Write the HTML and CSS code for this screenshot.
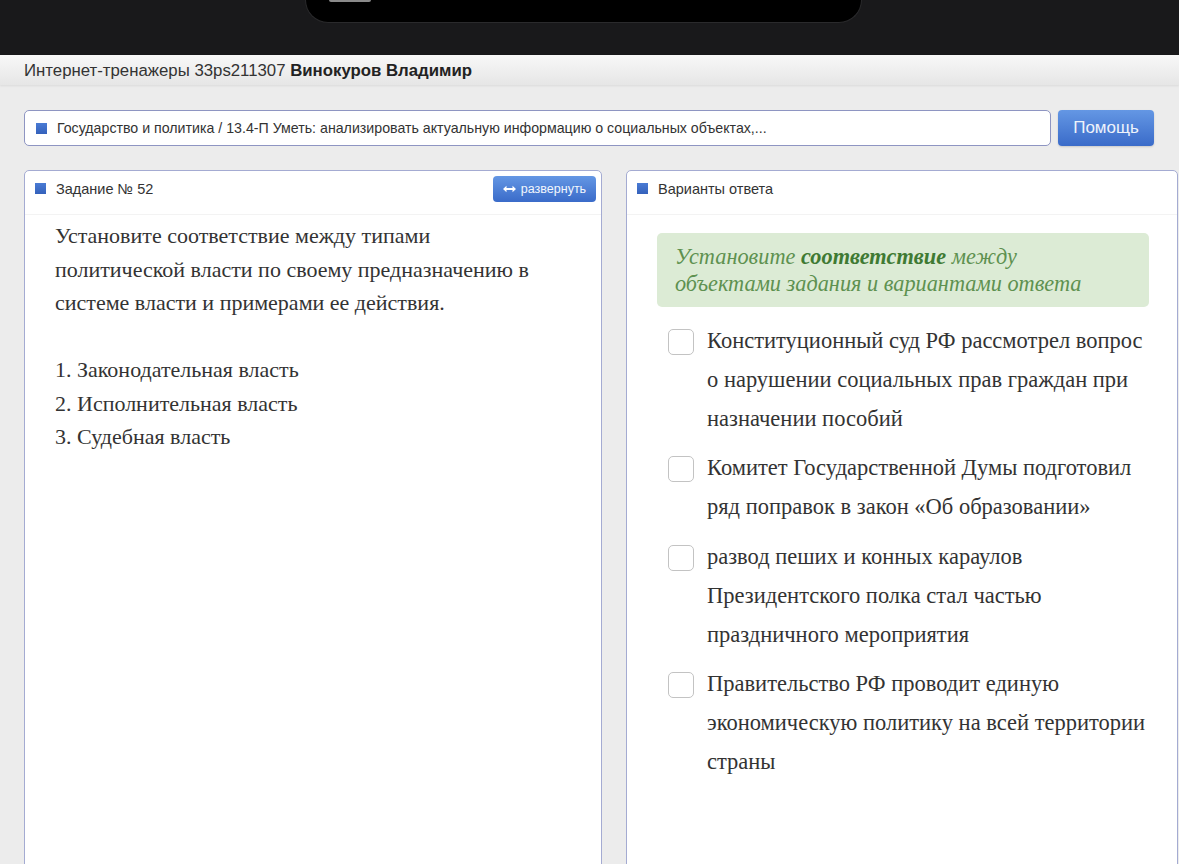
FILE: index.html
```html
<html>
<head>
  <meta charset="UTF-8">
  <meta name="viewport" content="width=device-width, initial-scale=1.0">
  <title>Интернет-тренажеры</title>
  <link rel="stylesheet" href="styles.css">
</head>
<body>
  <div class="device-top">
    <div class="notch">
      <div class="notch-mark"></div>
    </div>
  </div>

  <div class="topbar">
    Интернет-тренажеры 33ps211307 <b>Винокуров Владимир</b>
  </div>

  <div class="page">
    <div class="crumbs-row">
      <div class="crumbs">
        <span class="marker"></span>
        Государство и политика / 13.4-П Уметь: анализировать актуальную информацию о социальных объектах,...
      </div>
      <button class="btn btn-help">Помощь</button>
    </div>

    <div class="columns">
      <div class="panel">
        <div class="panel-head">
          <span class="marker"></span>
          <span class="panel-title">Задание № 52</span>
          <button class="btn btn-small">
            <svg width="13" height="8" viewBox="0 0 13 8">
              <path d="M0 4 L3.5 0.8 V3 H9.5 V0.8 L13 4 L9.5 7.2 V5 H3.5 V7.2 Z" fill="#fff"/>
            </svg>
            развернуть
          </button>
        </div>
        <div class="task-text">
          Установите соответствие между типами политической власти по своему предназначению в системе власти и примерами ее действия.<br>
          <br>
          1. Законодательная власть<br>
          2. Исполнительная власть<br>
          3. Судебная власть
        </div>
      </div>

      <div class="panel">
        <div class="panel-head">
          <span class="marker"></span>
          <span class="panel-title">Варианты ответа</span>
        </div>
        <div class="answers">
          <div class="hint">
            Установите <b>соответствие</b> между<br>
            объектами задания и вариантами ответа
          </div>
          <ul class="options">
            <li class="option">
              <span class="check"></span>
              <span class="option-text">Конституционный суд РФ рассмотрел вопрос о нарушении социальных прав граждан при назначении пособий</span>
            </li>
            <li class="option">
              <span class="check"></span>
              <span class="option-text">Комитет Государственной Думы подготовил ряд поправок в закон «Об образовании»</span>
            </li>
            <li class="option">
              <span class="check"></span>
              <span class="option-text">развод пеших и конных караулов Президентского полка стал частью праздничного мероприятия</span>
            </li>
            <li class="option">
              <span class="check"></span>
              <span class="option-text">Правительство РФ проводит единую экономическую политику на всей территории страны</span>
            </li>
          </ul>
        </div>
      </div>
    </div>
  </div>
</body>
</html>
```

FILE: styles.css
```css
:root {
  --blue: #3d6cc6;
  --border: #a4abd2;
  --text: #333333;
  --bg: #ececec;
}

* {
  margin: 0;
  padding: 0;
  box-sizing: border-box;
}

html, body {
  height: 100%;
  overflow: hidden;
}

body {
  background: var(--bg);
  font-family: 'Liberation Sans', Arial, sans-serif;
  color: var(--text);
}

/* phone status area */
.device-top {
  height: 55px;
  background: #19191b;
}

.notch {
  margin-left: 305px;
  width: 557px;
  height: 23px;
  background: #000;
  border: 1px solid #2a2a2c;
  border-top: none;
  border-radius: 0 0 36px 36px;
}

.notch-mark {
  margin-left: 23px;
  width: 42px;
  height: 2px;
  background: #8a8a8a;
  border-radius: 0 0 2px 2px;
}

.topbar {
  height: 30px;
  padding: 6px 24px 0;
  font-size: 16.8px;
  color: #333;
  background: linear-gradient(#f8f8f8, #e6e6e6);
  box-shadow: 0 1px 2px rgba(0,0,0,0.08);
}

.topbar b {
  color: #222;
}

.page {
  padding: 25px 1px 0 24px;
}

.crumbs-row {
  display: flex;
  gap: 7px;
  width: 1130px;
  height: 36px;
}

.crumbs {
  flex: 1;
  display: flex;
  align-items: center;
  padding-left: 11px;
  background: #fff;
  border: 1px solid #8e95c2;
  border-radius: 5px;
  font-size: 14.2px;
  color: #333;
  white-space: nowrap;
}

.marker {
  display: inline-block;
  width: 11px;
  height: 11px;
  margin-right: 10px;
  background: linear-gradient(#4a7bd4, #3461bb);
  flex-shrink: 0;
}

.btn {
  border: none;
  cursor: pointer;
  color: #fff;
  font-family: 'Liberation Sans', Arial, sans-serif;
  background: linear-gradient(#6497e4, #3a6bc9);
  border-radius: 4px;
}

.btn-help {
  width: 96px;
  font-size: 17px;
  color: #eef3fb;
  box-shadow: 0 1px 2px rgba(0,0,0,0.15);
}

.columns {
  display: grid;
  grid-template-columns: 578px 1fr;
  gap: 24px;
  margin-top: 24px;
}

.panel {
  background: #fff;
  border: 1px solid var(--border);
  border-radius: 5px 5px 0 0;
  height: 720px;
}

.panel-head {
  display: flex;
  align-items: center;
  height: 44px;
  padding: 5px 5px 13px 10px;
  border-bottom: 1px solid #f3f3f3;
  font-size: 14.5px;
  color: #333;
}

.panel-title {
  flex: 1;
}

.btn-small {
  display: flex;
  align-items: center;
  justify-content: center;
  gap: 5px;
  width: 103px;
  height: 26px;
  font-size: 12.5px;
  color: #f2f6fd;
}

.task-text {
  padding: 4px 45px 0 30px;
  font-family: 'Liberation Serif', 'Times New Roman', serif;
  font-size: 22px;
  line-height: 33.5px;
  color: #333;
}

.answers {
  padding: 18px 28px 0 30px;
}

.hint {
  background: #dcebd5;
  border-radius: 5px;
  padding: 10px 18px;
  font-family: 'Liberation Serif', 'Times New Roman', serif;
  font-style: italic;
  font-size: 22.3px;
  line-height: 27px;
  color: #5e9150;
}

.hint b {
  color: #3f7a33;
}

.options {
  list-style: none;
  margin-top: 15px;
  padding-left: 11px;
}

.option {
  display: flex;
  align-items: flex-start;
  gap: 13px;
  margin-bottom: 11px;
}

.check {
  width: 26px;
  height: 26px;
  margin-top: 7px;
  border: 1px solid #c3c3c3;
  border-radius: 5px;
  background: #fff;
  flex-shrink: 0;
}

.option-text {
  font-family: 'Liberation Serif', 'Times New Roman', serif;
  font-size: 22.5px;
  line-height: 38.8px;
  color: #333;
}
```
